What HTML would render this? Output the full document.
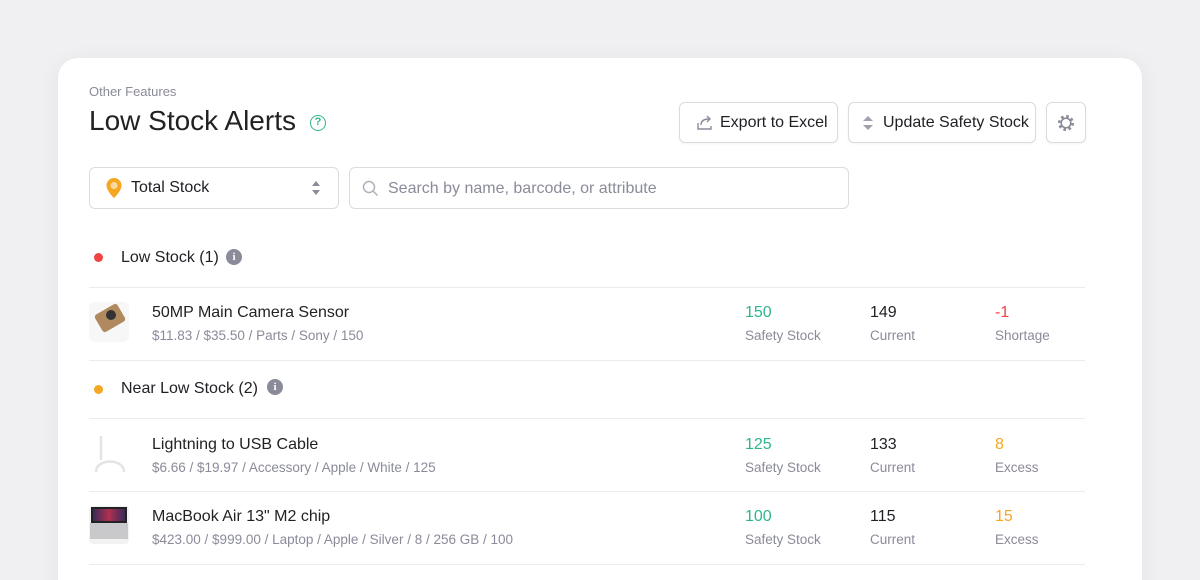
<!DOCTYPE html>
<html><head><meta charset="utf-8"><style>
*{box-sizing:border-box;margin:0;padding:0}
html{width:1200px;height:580px;overflow:hidden}
body{width:1200px;height:580px;overflow:hidden;background:#f0f0f2;font-family:"Liberation Sans",sans-serif;color:#1f1f24;position:relative}
.card{position:absolute;left:58px;top:58px;width:1084px;height:540px;background:#fff;border-radius:20px;box-shadow:0 4px 24px rgba(0,0,0,.06)}
.abs{position:absolute}
.btn{position:absolute;top:102px;height:41px;border:1px solid #dcdce0;border-radius:6px;background:#fff;font-size:16px;display:flex;align-items:center;box-shadow:0 1px 2px rgba(0,0,0,.05)}
.sep{position:absolute;left:89px;width:996px;height:1px;background:#ebebee}
.name{font-size:16px;color:#222}
.sub{font-size:13.5px;color:#8a8b99}
.num{font-size:16px}
.lbl{font-size:13.5px;color:#8a8b99}
.dot{position:absolute;width:9px;height:9px;border-radius:50%}
.info{position:absolute;width:16px;height:16px;border-radius:50%;background:#8a8b99;color:#fff;font-size:11px;font-weight:bold;text-align:center;line-height:16px;font-family:"Liberation Serif",serif}
</style></head><body>
<div class="card"></div>
<div class="abs" style="left:89px;top:84px;font-size:13px;color:#8a8b99">Other Features</div>
<div class="abs" style="left:89px;top:105px;font-size:28px;color:#222">Low Stock Alerts</div>
<div class="abs" style="left:310px;top:115px;width:16px;height:16px;border:1.6px solid #2fb58f;border-radius:50%;color:#2fb58f;font-size:11px;font-weight:bold;text-align:center;line-height:13px">?</div>

<div class="btn" style="left:679px;width:159px;padding-left:16px">
<svg width="18" height="18" viewBox="0 0 18 18" fill="none" stroke="#8a8b99" stroke-width="1.4"><path d="M2 9v6h13v-3"/><path d="M5 11c0-4 3-6 8-6"/><path d="M11 2l3 3-3 3"/></svg>
<span style="margin-left:6px">Export to Excel</span></div>
<div class="btn" style="left:848px;width:188px;padding-left:12px">
<svg width="14" height="18" viewBox="0 0 14 18" fill="#a0a1ad"><path d="M7 2l5 5H2z"/><path d="M7 16l5-5H2z"/></svg>
<span style="margin-left:8px">Update Safety Stock</span></div>
<div class="btn" style="left:1046px;width:40px;justify-content:center">
<svg width="18" height="18" viewBox="0 0 18 18" fill="none" stroke="#8a8b99"><circle cx="9" cy="9" r="6.5" stroke-width="3" stroke-dasharray="2.5 2.6"/><circle cx="9" cy="9" r="4.8" stroke-width="1.6"/></svg></div>

<div class="abs" style="left:89px;top:167px;width:250px;height:42px;border:1px solid #dcdce0;border-radius:6px"></div>
<svg class="abs" style="left:105px;top:177px" width="18" height="22" viewBox="0 0 18 22"><path d="M9 1a7.5 7.5 0 0 1 7.5 7.5C16.5 14 9 21 9 21S1.5 14 1.5 8.5A7.5 7.5 0 0 1 9 1z" fill="#f5a623"/><circle cx="9" cy="8.5" r="3.5" fill="#fcd9a0"/></svg>
<div class="abs" style="left:131px;top:179px;font-size:16px">Total Stock</div>
<svg class="abs" style="left:311px;top:181px" width="10" height="14" viewBox="0 0 10 14" fill="#8a8b99"><path d="M5 0l4 5H1z"/><path d="M5 14l4-5H1z"/></svg>
<div class="abs" style="left:349px;top:167px;width:500px;height:42px;border:1px solid #dcdce0;border-radius:6px"></div>
<svg class="abs" style="left:362px;top:180px" width="17" height="17" viewBox="0 0 17 17" fill="none" stroke="#b0b1bb" stroke-width="1.5"><circle cx="7" cy="7" r="5.5"/><path d="M11 11l4.5 4.5"/></svg>
<div class="abs" style="left:388px;top:180px;font-size:16px;color:#8a8b99">Search by name, barcode, or attribute</div>

<div class="dot" style="left:94px;top:253px;background:#ef4444"></div>
<div class="abs" style="left:121px;top:249px;font-size:16px">Low Stock (1)</div>
<div class="info" style="left:226px;top:249px">i</div>
<div class="sep" style="top:287px"></div>

<div class="abs" style="left:89px;top:302px;width:40px;height:40px;border-radius:6px;background:#f7f7f8"></div>
<div class="abs" style="left:97px;top:308px;width:26px;height:20px;background:#b08a5e;transform:rotate(-30deg);border-radius:3px"></div>
<div class="abs" style="left:106px;top:310px;width:10px;height:10px;border-radius:50%;background:#333"></div>
<div class="abs name" style="left:152px;top:304px">50MP Main Camera Sensor</div>
<div class="abs sub" style="left:152px;top:328px">$11.83 / $35.50 / Parts / Sony / 150</div>
<div class="abs num" style="left:745px;top:304px;color:#2fb58f">150</div>
<div class="abs lbl" style="left:745px;top:328px">Safety Stock</div>
<div class="abs num" style="left:870px;top:304px">149</div>
<div class="abs lbl" style="left:870px;top:328px">Current</div>
<div class="abs num" style="left:995px;top:304px;color:#ef4444">-1</div>
<div class="abs lbl" style="left:995px;top:328px">Shortage</div>
<div class="sep" style="top:360px"></div>

<div class="dot" style="left:94px;top:385px;background:#f5a623"></div>
<div class="abs" style="left:121px;top:380px;font-size:16px">Near Low Stock (2)</div>
<div class="info" style="left:267px;top:379px">i</div>
<div class="sep" style="top:418px"></div>

<svg class="abs" style="left:92px;top:434px" width="36" height="40" viewBox="0 0 36 40" fill="none" stroke="#e4e4e6" stroke-width="2.5"><path d="M9 2v10"/><path d="M4 38c0-14 28-14 28 0"/><path d="M9 12v14"/></svg>
<div class="abs name" style="left:152px;top:436px">Lightning to USB Cable</div>
<div class="abs sub" style="left:152px;top:460px">$6.66 / $19.97 / Accessory / Apple / White / 125</div>
<div class="abs num" style="left:745px;top:436px;color:#2fb58f">125</div>
<div class="abs lbl" style="left:745px;top:460px">Safety Stock</div>
<div class="abs num" style="left:870px;top:436px">133</div>
<div class="abs lbl" style="left:870px;top:460px">Current</div>
<div class="abs num" style="left:995px;top:436px;color:#f5a623">8</div>
<div class="abs lbl" style="left:995px;top:460px">Excess</div>
<div class="sep" style="top:491px"></div>

<div class="abs" style="left:89px;top:506px;width:40px;height:38px;border-radius:4px;background:#f2f2f3"></div>
<div class="abs" style="left:91px;top:507px;width:36px;height:16px;background:linear-gradient(90deg,#3a2a5a,#b03050,#3a2a5a);border:2px solid #222"></div>
<div class="abs" style="left:90px;top:523px;width:38px;height:16px;background:#c9c9cc"></div>
<div class="abs name" style="left:152px;top:508px">MacBook Air 13" M2 chip</div>
<div class="abs sub" style="left:152px;top:532px">$423.00 / $999.00 / Laptop / Apple / Silver / 8 / 256 GB / 100</div>
<div class="abs num" style="left:745px;top:508px;color:#2fb58f">100</div>
<div class="abs lbl" style="left:745px;top:532px">Safety Stock</div>
<div class="abs num" style="left:870px;top:508px">115</div>
<div class="abs lbl" style="left:870px;top:532px">Current</div>
<div class="abs num" style="left:995px;top:508px;color:#f5a623">15</div>
<div class="abs lbl" style="left:995px;top:532px">Excess</div>
<div class="sep" style="top:564px"></div>
</body></html>
